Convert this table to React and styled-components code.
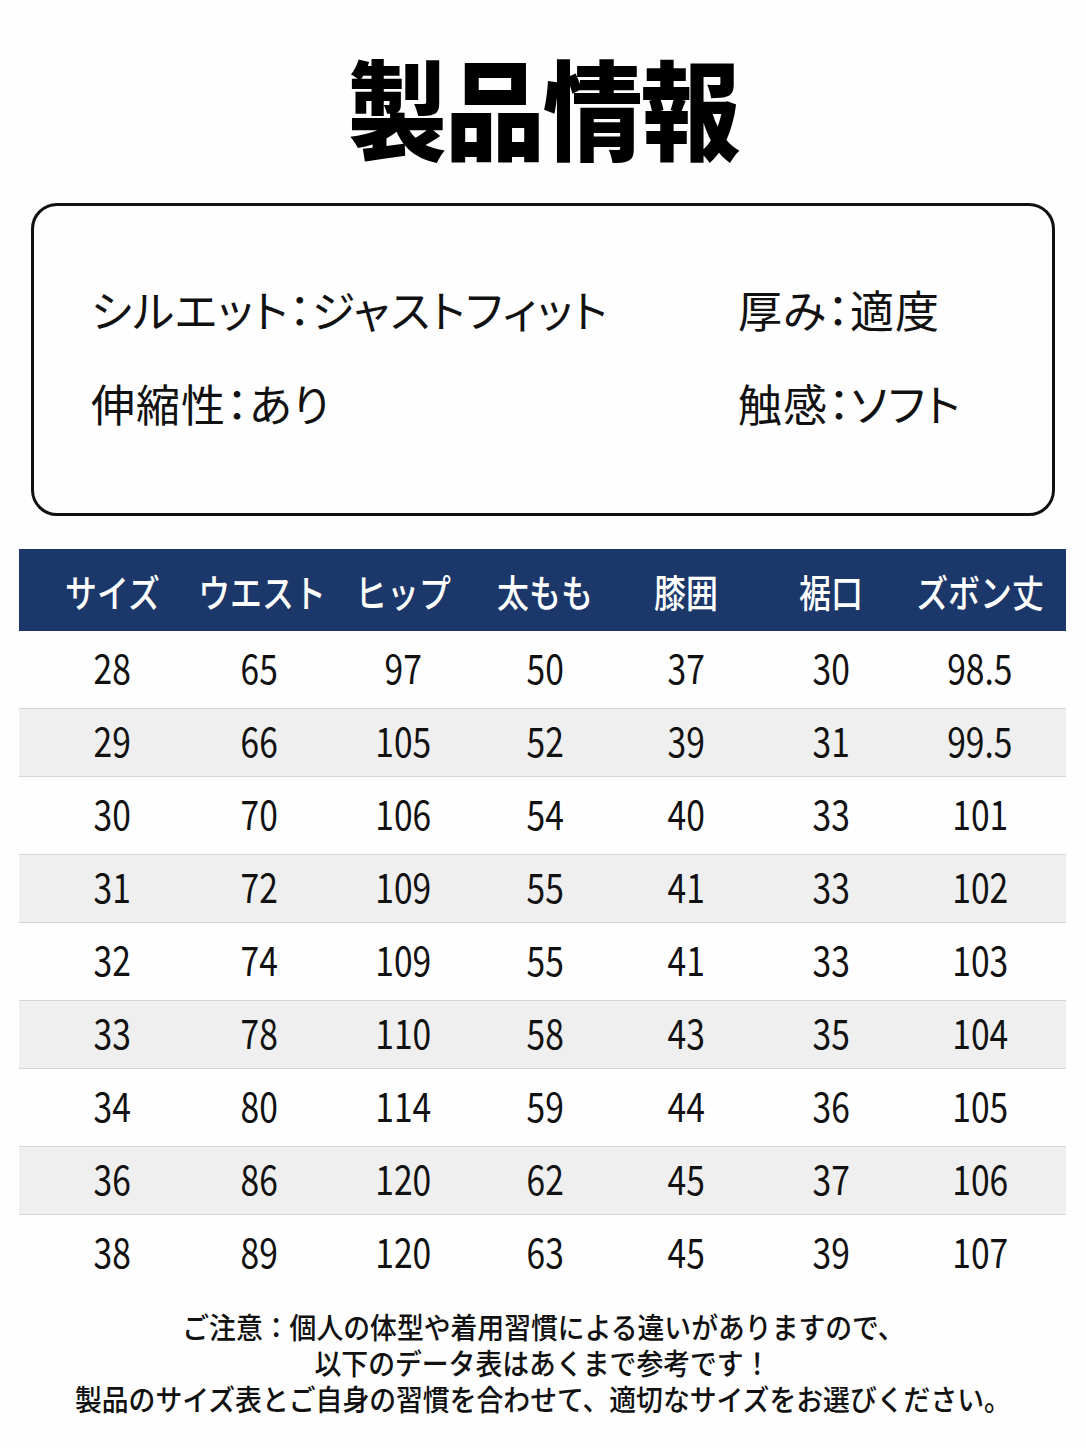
import React from "react";
import styled, { createGlobalStyle } from "styled-components";

const FONT = `"Noto Sans CJK JP", "Noto Sans", sans-serif`;

const headers = ["サイズ", "ウエスト", "ヒップ", "太もも", "膝囲", "裾口", "ズボン丈"];

const rows = [
  ["28", "65", "97", "50", "37", "30", "98.5"],
  ["29", "66", "105", "52", "39", "31", "99.5"],
  ["30", "70", "106", "54", "40", "33", "101"],
  ["31", "72", "109", "55", "41", "33", "102"],
  ["32", "74", "109", "55", "41", "33", "103"],
  ["33", "78", "110", "58", "43", "35", "104"],
  ["34", "80", "114", "59", "44", "36", "105"],
  ["36", "86", "120", "62", "45", "37", "106"],
  ["38", "89", "120", "63", "45", "39", "107"],
];

const specs = [
  ["シルエット：ジャストフィット", "厚み：適度"],
  ["伸縮性：あり", "触感：ソフト"],
];

export default function App() {
  return (
    <>
      <GlobalStyle />
      <Page>
        <Title>
          <Squeeze>製品情報</Squeeze>
        </Title>

        <SpecBox>
          {specs.map((pair, i) => (
            <SpecRow key={i}>
              <SpecText>{pair[0]}</SpecText>
              <SpecText>{pair[1]}</SpecText>
            </SpecRow>
          ))}
        </SpecBox>

        <Table>
          <HeadRow>
            {headers.map((h, i) => (
              <HeadCell key={h} $col={i}>
                <HeadText>{h}</HeadText>
              </HeadCell>
            ))}
          </HeadRow>
          {rows.map((r, ri) => (
            <BodyRow key={ri} $alt={ri % 2 === 1}>
              {r.map((v, ci) => (
                <Cell key={ci} $col={ci}>
                  <Num>{v}</Num>
                </Cell>
              ))}
            </BodyRow>
          ))}
        </Table>

        <Note>
          <NoteLine>ご注意：個人の体型や着用習慣による違いがありますので、</NoteLine>
          <NoteLine>以下のデータ表はあくまで参考です！</NoteLine>
          <NoteLine>製品のサイズ表とご自身の習慣を合わせて、適切なサイズをお選びください。</NoteLine>
        </Note>
      </Page>
    </>
  );
}

const GlobalStyle = createGlobalStyle`
  html, body {
    margin: 0;
    padding: 0;
    background: #fefefe;
  }
  body {
    font-family: ${FONT};
    color: #111;
  }
`;

const Page = styled.div`
  width: 1086px;
  height: 1448px;
  display: flex;
  flex-direction: column;
  align-items: center;
  overflow: hidden;
`;

const Title = styled.h1`
  margin: 40px 0 0;
  height: 130px;
  font-size: 106px;
  font-weight: 900;
  line-height: 130px;
  color: #000;
  text-align: center;
`;

const Squeeze = styled.span`
  display: inline-block;
  transform: scale(0.94, 1.02);
  letter-spacing: -2px;
`;

const SpecBox = styled.div`
  box-sizing: border-box;
  width: 1024px;
  height: 313px;
  margin-top: 33px;
  border: 3px solid #111;
  border-radius: 26px;
  display: flex;
  flex-direction: column;
  justify-content: center;
  gap: 46px;
  padding: 0 0 8px 57px;
`;

const SpecRow = styled.div`
  display: grid;
  grid-template-columns: 647px 1fr;
  height: 48px;
  align-items: center;
`;

const SpecText = styled.span`
  display: inline-block;
  font-size: 44px;
  line-height: 48px;
  letter-spacing: 1px;
  white-space: nowrap;
  font-feature-settings: "palt";
  color: #111;
`;

const Table = styled.div`
  width: 1047px;
  margin-top: 33px;
  align-self: flex-start;
  margin-left: 19px;
`;

const cols = "167px 146px 143px 140px 143px 146px 162px";

const HeadRow = styled.div`
  display: grid;
  grid-template-columns: ${cols};
  height: 82px;
  background: #1c3769;
  align-items: center;
`;

const colShift = (col) => {
  if (col === 0) return "padding-left: 20px;";
  if (col === 6) return "padding-right: 10px;";
  return "";
};

const HeadCell = styled.div`
  text-align: center;
  ${(p) => colShift(p.$col)}
`;

const HeadText = styled.span`
  display: inline-block;
  font-size: 38px;
  font-weight: 500;
  color: #fff;
  white-space: nowrap;
  transform: scaleX(0.84);
`;

const BodyRow = styled.div`
  display: grid;
  grid-template-columns: ${cols};
  height: ${(p) => (p.$alt ? "69px" : "77px")};
  align-items: center;
  background: ${(p) => (p.$alt ? "#efefef" : "#fefefe")};
  border-top: ${(p) => (p.$alt ? "1px solid #d6d6d6" : "none")};
  border-bottom: ${(p) => (p.$alt ? "1px solid #d6d6d6" : "none")};
  box-sizing: border-box;
`;

const Cell = styled.div`
  text-align: center;
  padding-bottom: 5px;
  ${(p) => colShift(p.$col)}
`;

const Num = styled.span`
  display: inline-block;
  font-size: 40px;
  font-weight: 400;
  color: #111;
  transform: scaleX(0.84);
`;

const Note = styled.div`
  margin-top: 16px;
  display: flex;
  flex-direction: column;
  align-items: center;
`;

const NoteLine = styled.div`
  font-size: 29px;
  line-height: 36px;
  font-weight: 500;
  color: #111;
  white-space: nowrap;
  transform: scaleX(0.925);
`;
